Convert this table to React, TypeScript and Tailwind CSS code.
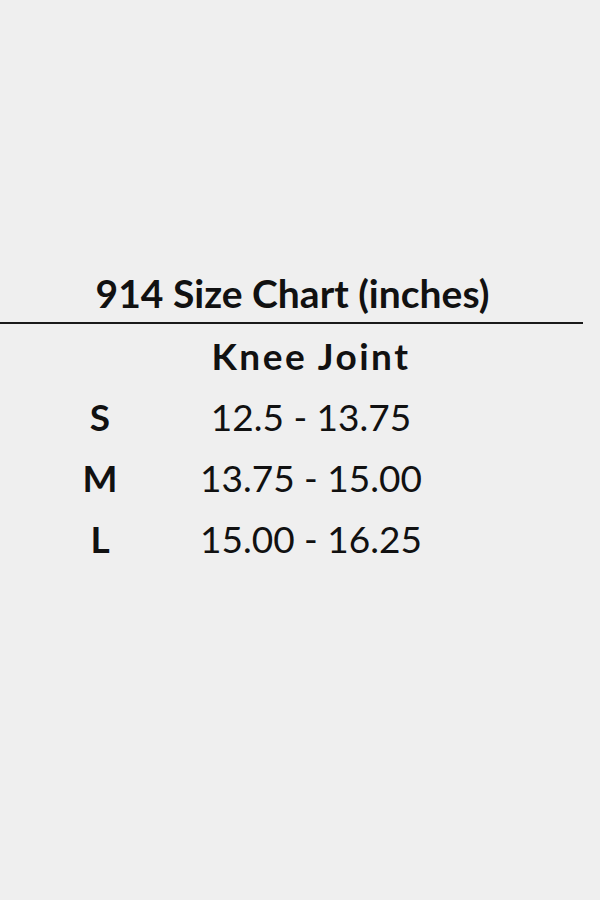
const rows = [
  { size: "S", range: "12.5 - 13.75" },
  { size: "M", range: "13.75 - 15.00" },
  { size: "L", range: "15.00 - 16.25" },
];

export default function App() {
  return (
    <div className="h-[900px] w-[600px] bg-[#efefef] font-['Lato',sans-serif] text-[#111]">
      <div className="w-[583px] pt-[270px]">
        <h1 className="pl-[2px] text-center text-[39px] font-bold leading-[46px]">
          914 Size Chart (inches)
        </h1>
        <div className="mt-[6px] h-[2px] bg-[#1a1a1a]" />
      </div>

      <div className="grid grid-cols-[200px_222px] pt-[1px] text-[37px] leading-[61px]">
        <div />
        <div className="text-center font-bold tracking-[2.5px]">Knee Joint</div>
        {rows.map((row) => (
          <div key={row.size} className="contents">
            <div className="text-center font-bold">{row.size}</div>
            <div className="text-center">{row.range}</div>
          </div>
        ))}
      </div>
    </div>
  );
}
